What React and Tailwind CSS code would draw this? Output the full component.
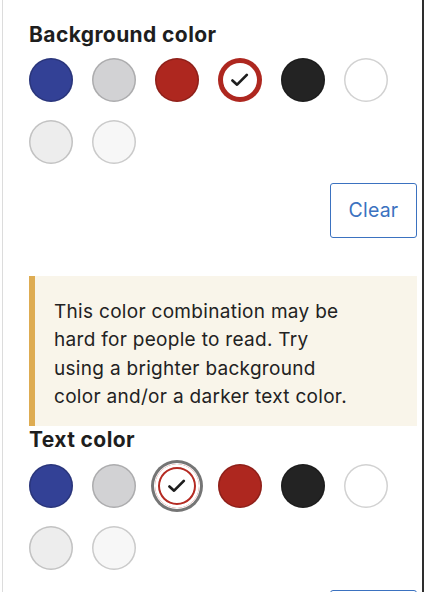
import React from 'react';

const bgColors = [
  { name: 'Blue', cls: 'bg-[#334196]' },
  { name: 'Gray', cls: 'bg-[#d2d2d4]' },
  { name: 'Red', cls: 'bg-[#ae271f]' },
  { name: 'Vivid red', selected: 'ring' },
  { name: 'Black', cls: 'bg-[#232323]' },
  { name: 'White', cls: 'bg-white' },
  { name: 'Light gray', cls: 'bg-[#ededed]' },
  { name: 'Off white', cls: 'bg-[#f7f7f7]' },
];

const textColors = [
  { name: 'Blue', cls: 'bg-[#334196]' },
  { name: 'Gray', cls: 'bg-[#d2d2d4]' },
  { name: 'Vivid red', selected: 'outline' },
  { name: 'Red', cls: 'bg-[#ae271f]' },
  { name: 'Black', cls: 'bg-[#232323]' },
  { name: 'White', cls: 'bg-white' },
  { name: 'Light gray', cls: 'bg-[#ededed]' },
  { name: 'Off white', cls: 'bg-[#f7f7f7]' },
];

const Check = () => (
  <svg className="w-[26px] h-[26px]" viewBox="0 0 24 24" fill="none" stroke="#1e1e1e" strokeWidth="2.5" strokeLinecap="round" strokeLinejoin="round">
    <path d="M5 12.5l4.3 3.8 9-9" />
  </svg>
);

const Swatch = ({ color }) => {
  if (color.selected === 'ring') {
    return (
      <button aria-label={color.name} className="w-11 h-11 rounded-full bg-[#ae271f] flex items-center justify-center">
        <span className="w-[34px] h-[34px] rounded-full bg-white flex items-center justify-center">
          <Check />
        </span>
      </button>
    );
  }
  if (color.selected === 'outline') {
    return (
      <button
        aria-label={color.name}
        className="w-11 h-11 rounded-full bg-white flex items-center justify-center shadow-[0_0_0_1px_#fff,0_0_0_4px_#757575,inset_0_0_0_3px_#fff,inset_0_0_0_5px_#b52a22]"
      >
        <Check />
      </button>
    );
  }
  return (
    <button
      aria-label={color.name}
      className={`w-11 h-11 rounded-full ${color.cls} shadow-[inset_0_0_0_1.5px_rgba(0,0,0,0.18)]`}
    />
  );
};

const Palette = ({ colors }) => (
  <div className="flex flex-wrap gap-x-[19px] gap-y-[18px] w-[370px]">
    {colors.map((c) => (
      <Swatch key={c.name} color={c} />
    ))}
  </div>
);

const ClearButton = () => (
  <div className="flex justify-end">
    <button className="w-[87px] h-[55px] rounded-[3px] border-[1.5px] border-[#3b72c0] text-[#3b72c0] text-[19.5px] tracking-[0.2px]">
      Clear
    </button>
  </div>
);

export default function App() {
  return (
    <div className="w-[424px] h-[592px] bg-white overflow-hidden pl-[2px] font-['Inter',sans-serif] text-[#1e1e1e]">
      <div className="h-full border-l-[1.5px] border-[#dcdcdc] border-r-2 border-r-[#2e2e2e] pl-[26px] pr-[5px] pt-[23px]">
        {/* Background color */}
        <h2 className="text-[21px] leading-6 font-bold tracking-[0.4px] mb-[11px]">Background color</h2>
        <Palette colors={bgColors} />
        <div className="mt-[19px]">
          <ClearButton />
        </div>

        {/* Contrast warning */}
        <div className="mt-[38px] h-[150px] bg-[#f9f5ea] border-l-[6px] border-[#deac52] pl-[19px] pt-[22px]">
          <p className="text-[19px] leading-[28.3px] tracking-[0.3px] text-[#222] w-[305px]">
            This color combination may be hard for people to read. Try using a brighter background color and/or a darker text color.
          </p>
        </div>

        {/* Text color */}
        <h2 className="text-[21px] leading-6 font-bold tracking-[0.4px] mt-[2px] mb-[12px]">Text color</h2>
        <Palette colors={textColors} />
        <div className="mt-[20px]">
          <ClearButton />
        </div>
      </div>
    </div>
  );
}
